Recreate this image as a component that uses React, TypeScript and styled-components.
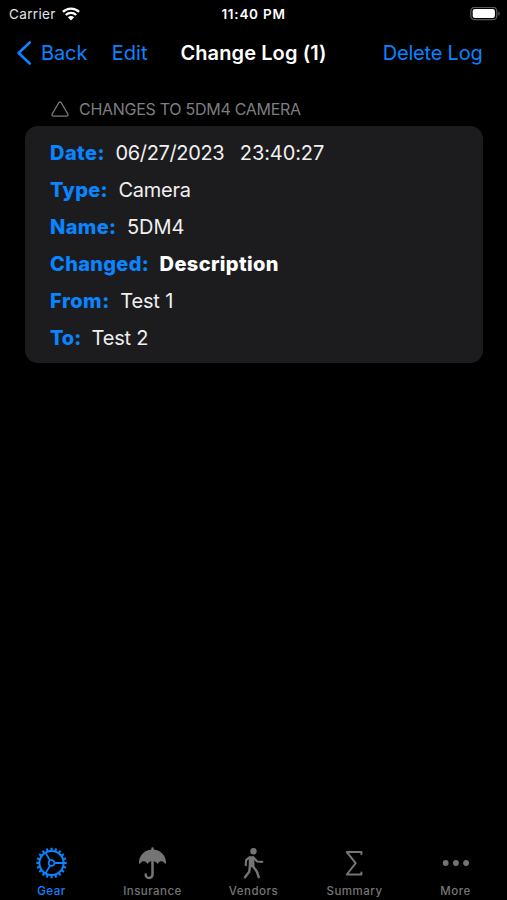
import React from 'react';
import styled, { createGlobalStyle } from 'styled-components';

const BLUE = '#0a84ff';
const GRAY = '#757575';

const GlobalStyle = createGlobalStyle`
  * {
    box-sizing: border-box;
  }

  body {
    margin: 0;
    background: #000;
    font-family: Inter, 'Liberation Sans', sans-serif;
  }
`;

const Screen = styled.div`
  display: flex;
  flex-direction: column;
  width: 507px;
  height: 900px;
  background: #000;
  color: #fff;
  overflow: hidden;
`;

const StatusBar = styled.header`
  display: grid;
  grid-template-columns: 1fr auto 1fr;
  align-items: center;
  height: 28px;
  padding: 0 6px;
  font-size: 13.5px;
`;

const Carrier = styled.div`
  display: flex;
  align-items: center;
  gap: 6px;
  padding-left: 3px;
  color: #e4e4e4;
  letter-spacing: 0.35px;
`;

const Clock = styled.div`
  font-size: 13.5px;
  font-weight: 600;
  letter-spacing: 0.75px;
`;

const BatteryIcon = styled.svg`
  justify-self: end;
`;

const NavBar = styled.nav`
  display: grid;
  grid-template-columns: 1fr auto 1fr;
  align-items: center;
  height: 50px;
  padding: 0 16px;
  font-size: 20px;
`;

const NavGroup = styled.div`
  display: flex;
  align-items: center;
`;

const NavButton = styled.button<{ $tracking?: number }>`
  display: flex;
  align-items: center;
  padding: 0;
  border: 0;
  background: none;
  color: ${BLUE};
  font: inherit;
  letter-spacing: ${({ $tracking = 0 }) => `${$tracking}px`};
  white-space: nowrap;
`;

const BackIcon = styled.svg`
  margin-right: 9px;
`;

const EditButton = styled(NavButton)`
  margin-left: 24.5px;
`;

const DeleteButton = styled(NavButton)`
  justify-self: end;
  margin-right: 8.5px;
`;

const Title = styled.h1`
  margin: 0;
  font-size: 20px;
  font-weight: 600;
  letter-spacing: 0.1px;
  white-space: nowrap;
`;

const Content = styled.main`
  flex: 1;
  padding: 20px 24px 0 25px;
`;

const SectionHeader = styled.h2`
  display: flex;
  align-items: center;
  gap: 10px;
  height: 22px;
  margin: 0 0 6px;
  padding-left: 26px;
  color: #7d7d82;
  font-size: 16px;
  font-weight: 400;
  letter-spacing: -0.28px;
`;

const Card = styled.section`
  padding: 8px 25px 7px;
  border-radius: 13px;
  background: #1c1c1e;
`;

const Row = styled.div`
  display: flex;
  align-items: center;
  height: 37px;
  font-size: 20px;
  white-space: pre;
`;

const Label = styled.span<{ $tracking: number }>`
  margin-right: 10.5px;
  color: ${BLUE};
  font-weight: 800;
  letter-spacing: ${({ $tracking }) => `${$tracking}px`};
`;

const Value = styled.span<{ $bold?: boolean; $tracking: number }>`
  margin-right: 15.5px;
  color: ${({ $bold }) => ($bold ? '#fff' : '#f0f0f0')};
  font-weight: ${({ $bold }) => ($bold ? 800 : 400)};
  letter-spacing: ${({ $tracking }) => `${$tracking}px`};
`;

const TabBar = styled.nav`
  display: grid;
  grid-template-columns: repeat(5, 101px);
  height: 56px;
  padding-left: 1px;
`;

const Tab = styled.div<{ $active?: boolean }>`
  display: flex;
  flex-direction: column;
  align-items: center;
  color: ${({ $active }) => ($active ? BLUE : GRAY)};
`;

const TabIcon = styled.svg`
  width: 36px;
  height: 36px;
  margin-top: 1px;
`;

const TabLabel = styled.span<{ $tracking: number }>`
  margin-top: 3px;
  font-size: 11.5px;
  font-weight: 500;
  line-height: 14px;
  letter-spacing: ${({ $tracking }) => `${$tracking}px`};
`;

interface LogRow {
  label: string;
  labelTracking: number;
  values: { text: string; tracking: number; bold?: boolean }[];
}

const rows: LogRow[] = [
  {
    label: 'Date:',
    labelTracking: 0.45,
    values: [
      { text: '06/27/2023', tracking: -0.35 },
      { text: '23:40:27', tracking: -0.1 },
    ],
  },
  { label: 'Type:', labelTracking: 0.3, values: [{ text: 'Camera', tracking: -0.25 }] },
  { label: 'Name:', labelTracking: 0.35, values: [{ text: '5DM4', tracking: 0 }] },
  { label: 'Changed:', labelTracking: 0.3, values: [{ text: 'Description', tracking: 0.38, bold: true }] },
  { label: 'From:', labelTracking: 0.5, values: [{ text: 'Test 1', tracking: -0.15 }] },
  { label: 'To:', labelTracking: -0.1, values: [{ text: 'Test 2', tracking: -0.2 }] },
];

const TOOTH_COUNT = 20;

const polar = (r: number, deg: number) => {
  const rad = (deg * Math.PI) / 180;
  return `${(17.5 + r * Math.cos(rad)).toFixed(2)} ${(18 + r * Math.sin(rad)).toFixed(2)}`;
};

const teeth = Array.from({ length: TOOTH_COUNT }, (_, i) => {
  const deg = (i * 360) / TOOTH_COUNT;
  return `M${polar(12.5, deg)}L${polar(15.2, deg)}`;
}).join('');

const spokes = [0, 120, 240].map((deg) => `M${polar(3, deg)}L${polar(12, deg)}`).join('');

const GearIcon = () => (
  <TabIcon viewBox="0 0 36 36" fill="none" stroke="currentColor">
    <circle cx="17.5" cy="18" r="12.1" strokeWidth="2" />
    <circle cx="17.5" cy="18" r="2.9" strokeWidth="1.6" />
    <path d={teeth} strokeWidth="2.1" />
    <path d={spokes} strokeWidth="1.8" />
  </TabIcon>
);

const UmbrellaIcon = () => (
  <TabIcon viewBox="0.5 0 36 36" fill="none" stroke="currentColor" strokeLinecap="round">
    <path
      d="M4.4 17.7C4.8 10 10.5 4.6 18 4.6s13.2 5.4 13.6 13.1c0 1.2-1 1.3-1.6.4-1.7-2.5-4.8-2.4-6.2 0-.5.8-1 .8-1.5 0-1.9-2.8-6.7-2.8-8.6 0-.5.8-1 .8-1.5 0-1.4-2.4-4.5-2.5-6.2 0-.6.9-1.6.8-1.6-.4z"
      fill="currentColor"
      stroke="none"
    />
    <path d="M18 3.4V29.3c0 4.8-6.8 4.8-6.8.3" strokeWidth="2.5" />
  </TabIcon>
);

const WalkIcon = () => (
  <TabIcon viewBox="1 0 36 36" fill="none" stroke="currentColor" strokeLinecap="round" strokeLinejoin="round">
    <circle cx="18.5" cy="6.2" r="3.2" fill="currentColor" stroke="none" />
    <path d="M14.8 12.3h3.5l.2 8.5-3.8.7z" fill="currentColor" strokeWidth="2" />
    <path d="M14.5 12.3l-3.4 2.8-.4 5.2" strokeWidth="2.1" />
    <path d="M18.5 12.5l3.6 4 5 .4" strokeWidth="2.1" />
    <path d="M14.9 21.5l-.7 5.3-4.2 5.4" strokeWidth="2.4" />
    <path d="M17.7 21l4 5.2 2 6" strokeWidth="2.4" />
  </TabIcon>
);

const SigmaIcon = () => (
  <TabIcon viewBox="1 0 36 36" fill="none" stroke="currentColor" strokeLinecap="round" strokeLinejoin="round">
    <path d="M25.4 9V7.1H10.8L19.7 18.2 10.8 29.5H25.4V27.6" strokeWidth="2" />
  </TabIcon>
);

const MoreIcon = () => (
  <TabIcon viewBox="0.3 0 36 36" fill="currentColor">
    <circle cx="8" cy="18" r="2.9" />
    <circle cx="18.2" cy="18" r="2.9" />
    <circle cx="28.4" cy="18" r="2.9" />
  </TabIcon>
);

const tabs = [
  { label: 'Gear', Icon: GearIcon, active: true, tracking: 0.5 },
  { label: 'Insurance', Icon: UmbrellaIcon, tracking: 0.45 },
  { label: 'Vendors', Icon: WalkIcon, tracking: 0.5 },
  { label: 'Summary', Icon: SigmaIcon, tracking: 0.5 },
  { label: 'More', Icon: MoreIcon, tracking: 0.5 },
];

const App: React.FC = () => (
  <>
    <GlobalStyle />
    <Screen>
      <StatusBar>
        <Carrier>
          Carrier
          <svg width="18" height="14" viewBox="0 0 18 14" fill="none" stroke="#fff" strokeWidth="2.3">
            <path d="M.9 4.9C5.5.4 12.5.4 17.1 4.9" />
            <path d="M3.8 8C6.7 5.2 11.3 5.2 14.2 8" />
            <path d="M9 13.4L5.9 10.3c1.7-1.7 4.5-1.7 6.2 0z" fill="#fff" stroke="none" />
          </svg>
        </Carrier>
        <Clock>11:40 PM</Clock>
        <BatteryIcon width="31" height="14" viewBox="0 0 31 14">
          <rect x=".8" y=".3" width="26" height="12.4" rx="3.8" fill="none" stroke="#5c5c5c" strokeWidth="1.3" />
          <rect x="2.7" y="2.1" width="22.2" height="8.8" rx="2.2" fill="#fff" />
          <path d="M28.3 4.2c1.9.8 1.9 3.8 0 4.6z" fill="#5c5c5c" />
        </BatteryIcon>
      </StatusBar>

      <NavBar>
        <NavGroup>
          <NavButton $tracking={-0.1}>
            <BackIcon width="16" height="24" viewBox="0 0 16 24" fill="none" stroke={BLUE} strokeWidth="2.6">
              <path d="M13.7 1.5L2.7 12l11 10.5" strokeLinecap="round" strokeLinejoin="round" />
            </BackIcon>
            Back
          </NavButton>
          <EditButton>Edit</EditButton>
        </NavGroup>
        <Title>Change Log (1)</Title>
        <DeleteButton $tracking={-0.2}>Delete Log</DeleteButton>
      </NavBar>

      <Content>
        <SectionHeader>
          <svg width="18" height="16" viewBox="0 0 18 16" fill="none" stroke="currentColor" strokeWidth="1.3">
            <path d="M7.9 1.5Q9 .1 10.1 1.5L16.9 13.3Q17.4 14.9 15.9 15.1H2.1Q.6 14.9 1.1 13.3z" />
          </svg>
          CHANGES TO 5DM4 CAMERA
        </SectionHeader>
        <Card>
          {rows.map((row) => (
            <Row key={row.label}>
              <Label $tracking={row.labelTracking}>{row.label}</Label>
              {row.values.map((value) => (
                <Value key={value.text} $bold={value.bold} $tracking={value.tracking}>
                  {value.text}
                </Value>
              ))}
            </Row>
          ))}
        </Card>
      </Content>

      <TabBar>
        {tabs.map(({ label, Icon, active, tracking }) => (
          <Tab key={label} $active={active}>
            <Icon />
            <TabLabel $tracking={tracking}>{label}</TabLabel>
          </Tab>
        ))}
      </TabBar>
    </Screen>
  </>
);

export default App;
